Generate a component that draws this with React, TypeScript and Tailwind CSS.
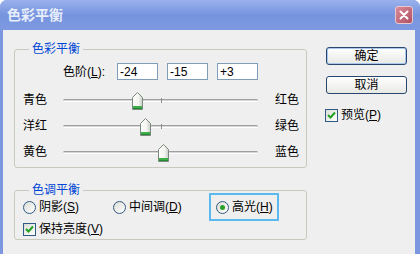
import React from 'react';

const sliders = [
  { left: '青色', right: '红色', value: -24 },
  { left: '洋红', right: '绿色', value: -15 },
  { left: '黄色', right: '蓝色', value: 3 },
];

const TRACK = 195;

function Thumb() {
  return (
    <svg width="11" height="18" viewBox="0 0 11 18">
      <defs>
        <linearGradient id="tg" x1="0" y1="0" x2="1" y2="0">
          <stop offset="0" stopColor="#ffffff" />
          <stop offset="0.6" stopColor="#f4f4f0" />
          <stop offset="1" stopColor="#c8cfc8" />
        </linearGradient>
      </defs>
      <path d="M5.5 0.5 L10.5 5.5 L10.5 17.5 L0.5 17.5 L0.5 5.5 Z" fill="url(#tg)" stroke="#7b8a7e" />
      <rect x="1" y="14" width="9" height="3" fill="#3fae49" />
      <rect x="1" y="16" width="9" height="1" fill="#228a2e" />
    </svg>
  );
}

function Radio({ checked }: { checked?: boolean }) {
  return (
    <span className="w-[13px] h-[13px] rounded-full border border-[#2f5a86] bg-gradient-to-br from-[#dcdcd6] to-white flex items-center justify-center shrink-0">
      {checked && <span className="w-[5px] h-[5px] rounded-full bg-[#2aa12a]" />}
    </span>
  );
}

function Check() {
  return (
    <span className="w-[13px] h-[13px] border border-[#2f5a86] bg-gradient-to-br from-[#dcdcd6] to-white flex items-center justify-center shrink-0">
      <svg width="9" height="9" viewBox="0 0 9 9">
        <path d="M1 4 L3.5 6.5 L8 1.5" fill="none" stroke="#21a121" strokeWidth="2" />
      </svg>
    </span>
  );
}

function Button({ label, primary }: { label: string; primary?: boolean }) {
  return (
    <div
      className={`w-[81px] h-[18px] rounded-[3px] border border-[#27476e] bg-gradient-to-b from-white to-[#e8e8e4] flex items-center justify-center ${
        primary ? 'shadow-[inset_0_0_0_1px_#a9c6ee]' : ''
      }`}
    >
      {label}
    </div>
  );
}

export default function App() {
  return (
    <div className="w-[420px] h-[254px] bg-[#7b97e0] rounded-t-[7px] overflow-hidden flex flex-col font-['Liberation_Sans','Noto_Sans_CJK_SC',sans-serif] text-[12px] text-black">
      <div className="h-[30px] shrink-0 flex items-center bg-gradient-to-b from-[#9ab1ec] via-[#7694df] to-[#7d99e1]">
        <span className="pl-[7px] text-[14px] font-bold text-[#e8eefb]">色彩平衡</span>
        <div className="ml-auto mr-[7px] w-[18px] h-[18px] rounded-[3px] border border-[#e9c9cf] bg-gradient-to-br from-[#d98c99] to-[#b04f62] flex items-center justify-center">
          <svg width="10" height="10" viewBox="0 0 10 10">
            <path d="M1.5 1.5 L8.5 8.5 M8.5 1.5 L1.5 8.5" stroke="#ffffff" strokeWidth="2" strokeLinecap="round" />
          </svg>
        </div>
      </div>

      <div className="flex-1 ml-[3px] mr-[5px] bg-[#efefef] flex items-start pl-[11px]">
        <div className="flex flex-col pt-[12px]">
          <fieldset className="w-[293px] border border-[#c9c9c0] rounded-[3px]">
            <legend className="ml-[14px] px-[3px] leading-[14px] text-[#0046d5]">色彩平衡</legend>
            <div className="pl-[8px] pb-[2px]">
              <div className="mt-[7px] ml-[40px] h-[17px] flex items-center">
                <span className="w-[54px]">
                  色阶(<u>L</u>):
                </span>
                {['-24', '-15', '+3'].map((v, i) => (
                  <div
                    key={v}
                    className={`w-[41px] h-[17px] border border-[#7f9db9] bg-white flex items-center pl-[2px] ${
                      i > 0 ? 'ml-[9px]' : ''
                    }`}
                  >
                    {v}
                  </div>
                ))}
              </div>
              <div className="mt-[7px] flex flex-col">
                {sliders.map((s) => (
                  <div key={s.left} className="h-[26px] flex items-center">
                    <span className="w-[40px]">{s.left}</span>
                    <div className="relative w-[195px] h-full">
                      <div className="absolute left-0 right-0 top-[12px] h-[3px] rounded-full border-t border-[#9f9f9f] border-b border-b-white bg-[#d6d6d6]" />
                      <div className="absolute left-[98px] top-[11px] w-px h-[5px] bg-[#8c8c8c]" />
                      <div
                        className="absolute top-[5px]"
                        style={{ left: ((s.value + 100) / 200) * (TRACK - 1) - 5 }}
                      >
                        <Thumb />
                      </div>
                    </div>
                    <span className="ml-[17px]">{s.right}</span>
                  </div>
                ))}
              </div>
            </div>
          </fieldset>

          <fieldset className="mt-[15px] w-[293px] border border-[#c9c9c0] rounded-[3px]">
            <legend className="ml-[14px] px-[3px] leading-[14px] text-[#0046d5]">色调平衡</legend>
            <div className="pl-[8px] pb-[3px]">
              <div className="-mt-[4px] h-[28px] flex items-center">
                <div className="w-[90px] flex items-center gap-[3px]">
                  <Radio />
                  <span>
                    阴影(<u>S</u>)
                  </span>
                </div>
                <div className="w-[96px] flex items-center gap-[3px]">
                  <Radio />
                  <span>
                    中间调(<u>D</u>)
                  </span>
                </div>
                <div className="w-[70px] h-[28px] border-2 border-[#5cb9ef] pl-[5px] flex items-center gap-[3px]">
                  <Radio checked />
                  <span>
                    高光(<u>H</u>)
                  </span>
                </div>
              </div>
              <div className="mt-[1px] h-[14px] flex items-center gap-[3px]">
                <Check />
                <span>
                  保持亮度(<u>V</u>)
                </span>
              </div>
            </div>
          </fieldset>
        </div>

        <div className="ml-[19px] mt-[17px] flex flex-col">
          <Button label="确定" primary />
          <div className="mt-[11px]">
            <Button label="取消" />
          </div>
          <div className="mt-[14px] -ml-[1px] h-[14px] flex items-center gap-[3px]">
            <Check />
            <span>
              预览(<u>P</u>)
            </span>
          </div>
        </div>
      </div>
    </div>
  );
}
